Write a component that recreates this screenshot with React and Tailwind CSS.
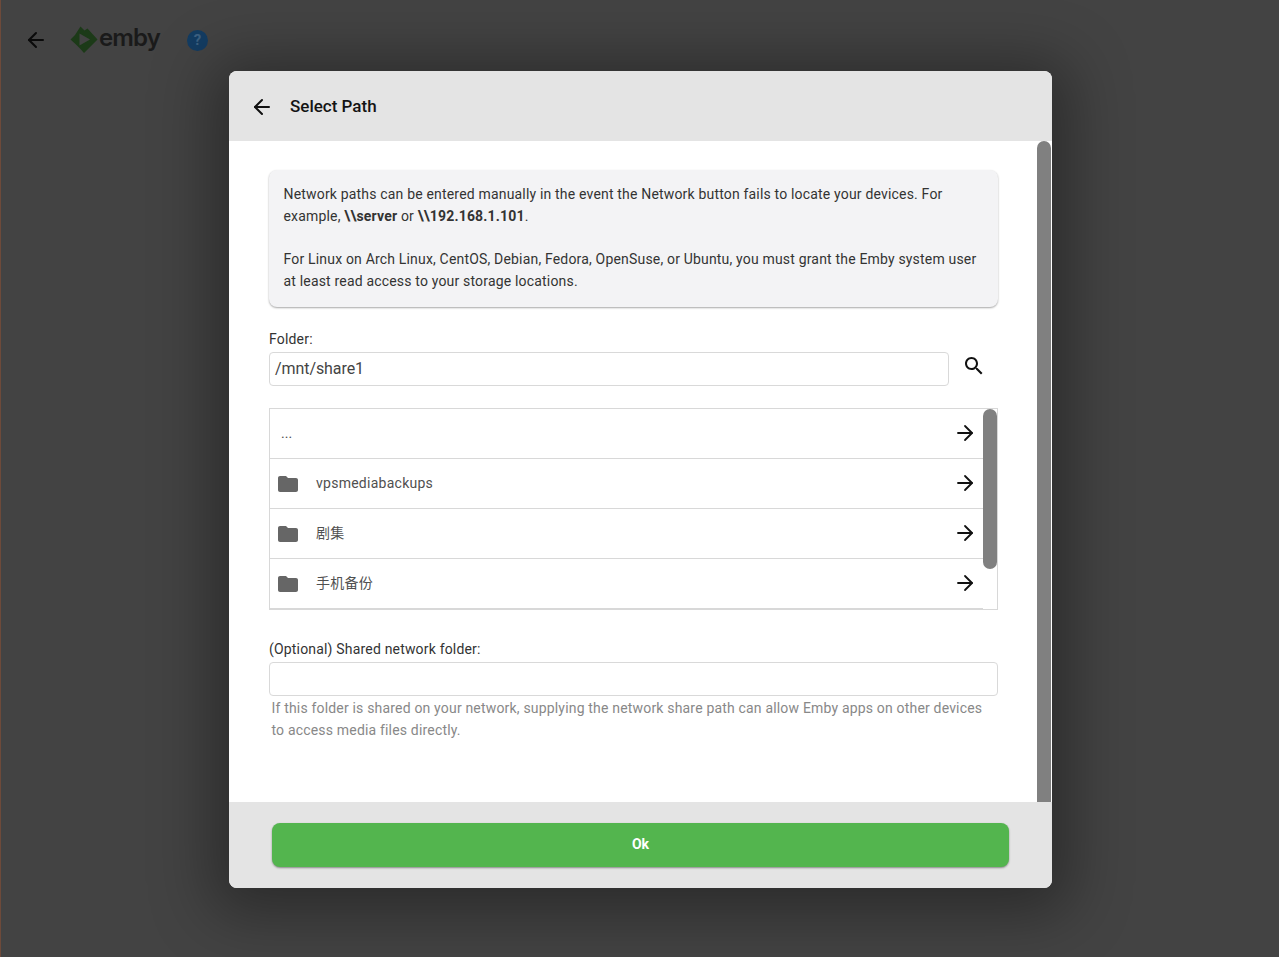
import { ArrowLeft, ArrowRight } from 'lucide-react';

const rows = [
  { name: '...', folder: false },
  { name: 'vpsmediabackups', folder: true },
  { name: '剧集', folder: true },
  { name: '手机备份', folder: true },
];

function FolderIcon() {
  return (
    <svg width="24" height="24" viewBox="0 0 24 24" fill="#666666" className="shrink-0">
      <path d="M10 4H4c-1.100 0-2 .9-2 2v12c0 1.100.9 2 2 2h16c1.100 0 2-.9 2-2V8c0-1.100-.9-2-2-2h-8l-2-2z" />
    </svg>
  );
}

function SearchIcon() {
  return (
    <svg width="24" height="24" viewBox="0 0 24 24" fill="#111111" className="shrink-0 ml-[13px] -mt-[6px]">
      <path d="M15.500 14h-.79l-.28-.27C15.410 12.590 16 11.110 16 9.500 16 5.910 13.090 3 9.500 3S3 5.910 3 9.500 5.910 16 9.500 16c1.610 0 3.090-.59 4.230-1.570l.27.28v.79l5 4.990L20.490 19l-4.990-5zm-6 0C7.010 14 5 11.990 5 9.500S7.010 5 9.500 5 14 7.010 14 9.500 11.990 14 9.500 14z" />
    </svg>
  );
}

function EmbyLogo() {
  return (
    <div className="flex items-center">
      <svg width="28" height="28" viewBox="0 0 28 28" className="shrink-0">
        <path d="M10.500 0.500 L14.500 4.500 L17.500 2.500 L27.500 13.500 L14 27 L10.500 23 L6.500 19 L0.500 13.500 L5 9 Z" fill="#1c3a18" />
        <path d="M9.500 7.500 L20 13.500 L9.500 19.500 Z" fill="#434343" />
      </svg>
      <span className="ml-[1px] text-[24px] leading-none font-semibold tracking-[-0.9px] text-[#1a1a1a] font-['Inter',sans-serif] relative top-[-2px]">emby</span>
    </div>
  );
}

function BrowserRow({ row }) {
  return (
    <div className="h-[50px] flex items-center border-b border-[#d8d8d8] pr-[6px]">
      {row.folder ? (
        <div className="flex items-center pl-[6px] flex-1 min-w-0">
          <FolderIcon />
          <span className="ml-[16px] text-[14px] tracking-[0.26px] text-[#505050]">{row.name}</span>
        </div>
      ) : (
        <span className="pl-[11px] flex-1 text-[14px] text-[#505050]">{row.name}</span>
      )}
      <ArrowRight size={24} strokeWidth={1.8} color="#111111" className="-mt-[2px]" />
    </div>
  );
}

export default function App() {
  return (
    <div className="relative h-[957px] w-[1279px] overflow-hidden bg-[#434343] border-l border-[#6e4a3a] font-['Roboto','Noto_Sans_CJK_SC',sans-serif]">
      <header className="flex items-center h-[80px] pl-[23px]">
        <ArrowLeft size={24} strokeWidth={2} color="#0a0a0a" />
        <div className="ml-[22px]">
          <EmbyLogo />
        </div>
        <div className="ml-[27px] w-[21px] h-[21px] rounded-full bg-[#133c62] flex items-center justify-center text-[15px] font-bold text-[#3d6080]">?</div>
      </header>

      <div className="absolute left-[228px] top-[71px] w-[823px] h-[817px] rounded-[8px] overflow-hidden flex flex-col bg-white shadow-[0_8px_60px_18px_rgba(0,0,0,0.35)]">
        <div className="h-[70px] shrink-0 bg-[#e4e4e4] flex items-center pl-[21px] pt-[2px]">
          <ArrowLeft size={24} strokeWidth={2} color="#111111" />
          <h1 className="ml-[16px] text-[17px] font-medium text-[#141414]">Select Path</h1>
        </div>

        <div className="relative flex-1 min-h-0 pl-[40px] pt-[29px] pr-[54px]">
          <div className="rounded-[8px] bg-[#f3f3f5] shadow-[0_1px_2px_rgba(0,0,0,0.35)] pl-[14.5px] pr-[14px] pt-[13px] h-[137px] text-[14px] tracking-[0.18px] leading-[22px] text-[#333333]">
            <p>
              Network paths can be entered manually in the event the Network button fails to locate your devices. For example, <b className="font-bold">\\server</b> or <b className="font-bold">\\192.168.1.101</b>.
            </p>
            <p className="mt-[21px]">
              For Linux on Arch Linux, CentOS, Debian, Fedora, OpenSuse, or Ubuntu, you must grant the Emby system user at least read access to your storage locations.
            </p>
          </div>

          <label className="block mt-[23px] text-[14px] tracking-[0.18px] leading-[18px] text-[#333333]">Folder:</label>
          <div className="mt-[4px] flex items-center">
            <div className="w-[680px] h-[34px] rounded-[4px] border border-[#d9d9d9] flex items-center pl-[5px] text-[16px] tracking-[-0.08px] text-[#444444]">/mnt/share1</div>
            <SearchIcon />
          </div>

          <div className="relative mt-[22px] h-[202px] border border-[#d8d8d8]">
            <div className="w-[713px]">
              {rows.map((row) => (
                <BrowserRow key={row.name} row={row} />
              ))}
            </div>
            <div className="absolute right-0 top-0 w-[14px] h-[160px] rounded-[7px] bg-[#808080]" />
          </div>

          <label className="block mt-[30px] text-[14px] tracking-[0.18px] leading-[18px] text-[#333333]">(Optional) Shared network folder:</label>
          <div className="mt-[4px] h-[34px] rounded-[4px] border border-[#d9d9d9]" />
          <p className="mt-[1px] pl-[2.500px] text-[14px] tracking-[0.18px] leading-[22px] text-[#888888]">
            If this folder is shared on your network, supplying the network share path can allow Emby apps on other devices to access media files directly.
          </p>

          <div className="absolute right-[1px] top-0 bottom-0 w-[14px] rounded-t-[7px] bg-[#808080]" />
        </div>

        <div className="h-[86px] shrink-0 bg-[#e4e4e4] pl-[43px] pt-[21px]">
          <button className="w-[737px] h-[44px] pb-[2px] rounded-[8px] bg-[#53b54e] shadow-[0_1px_2px_rgba(0,0,0,0.4)] text-white text-[14px] font-bold">Ok</button>
        </div>
      </div>
    </div>
  );
}
